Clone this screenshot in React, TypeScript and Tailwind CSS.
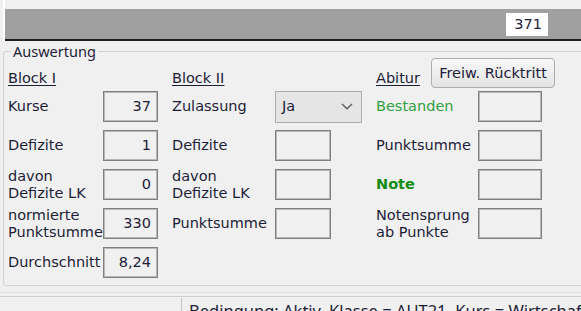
import React from "react";

const label = "text-[#1d1d38]";

function ValueBox({ value, w }: { value?: string; w: string }) {
  return (
    <div
      className={`${w} h-[31px] shrink-0 border border-[#7f7f7f] shadow-[inset_0_0_0_1px_#b8b8b8] bg-[#f0f0f0] flex items-center justify-end pr-[6px] ${label}`}
    >
      {value}
    </div>
  );
}

function Row({ children, box }: { children: React.ReactNode; box: React.ReactNode }) {
  return (
    <div className="h-[31px] flex items-center">
      {children}
      {box}
    </div>
  );
}

function Combo({ value }: { value: string }) {
  return (
    <div className="w-[87px] h-[32px] shrink-0 bg-[#e5e5e5] border border-[#adadad] flex items-center pl-[6px] pr-[8px]">
      <span className={label}>{value}</span>
      <svg className="ml-auto" width="12" height="7" viewBox="0 0 12 7">
        <path d="M1 1 L6 5.8 L11 1" fill="none" stroke="#5a5a5a" strokeWidth="1.3" />
      </svg>
    </div>
  );
}

export default function App() {
  return (
    <div className="w-[581px] h-[311px] overflow-hidden bg-[#f0f0f0] font-['DejaVu_Sans',sans-serif] text-[14.5px] leading-[17px]">
      {/* grid footer bar */}
      <div className="h-[41px] ml-[3px] border-l-2 border-white flex flex-col">
        <div className="h-[9px]" />
        <div className="h-[30px] bg-[#a0a0a0] flex items-center justify-end pr-[33px]">
          <div className="w-[42px] h-[23px] bg-white flex items-center justify-end pr-[6px] text-[#1d1d38]">
            371
          </div>
        </div>
        <div className="h-[2px] bg-[#1e1e1e]" />
      </div>

      <fieldset className="mt-[2px] ml-[3px] w-[600px] h-[243px] border border-[#d3d3d3] rounded-[3px]">
        <legend className="ml-[7px] px-[2px] leading-[17px] text-[14.5px] font-['Noto_Sans',sans-serif] text-[#1d1d38]">
          Auswertung
        </legend>
        <div className="flex pl-[4px]">
          {/* Block I */}
          <div className="w-[164px] shrink-0">
            <div className="h-[31px] flex items-end pb-[4px]">
              <span className={`${label} underline underline-offset-2`}>Block I</span>
            </div>
            <div className="flex flex-col gap-[8px]">
              <Row box={<ValueBox w="w-[55px]" value="37" />}>
                <span className={`w-[95px] ${label}`}>Kurse</span>
              </Row>
              <Row box={<ValueBox w="w-[55px]" value="1" />}>
                <span className={`w-[95px] ${label}`}>Defizite</span>
              </Row>
              <Row box={<ValueBox w="w-[55px]" value="0" />}>
                <span className={`w-[95px] ${label}`}>
                  davon
                  <br />
                  Defizite LK
                </span>
              </Row>
              <Row box={<ValueBox w="w-[55px]" value="330" />}>
                <span className={`w-[95px] ${label}`}>
                  normierte
                  <br />
                  Punktsumme
                </span>
              </Row>
              <Row box={<ValueBox w="w-[55px]" value="8,24" />}>
                <span className={`w-[95px] whitespace-nowrap ${label}`}>Durchschnitt</span>
              </Row>
            </div>
          </div>

          {/* Block II */}
          <div className="w-[204px] shrink-0">
            <div className="h-[31px] flex items-end pb-[4px]">
              <span className={`${label} underline underline-offset-2`}>Block II</span>
            </div>
            <div className="flex flex-col gap-[8px]">
              <Row box={<Combo value="Ja" />}>
                <span className={`w-[103px] ${label}`}>Zulassung</span>
              </Row>
              <Row box={<ValueBox w="w-[56px]" />}>
                <span className={`w-[103px] ${label}`}>Defizite</span>
              </Row>
              <Row box={<ValueBox w="w-[56px]" />}>
                <span className={`w-[103px] ${label}`}>
                  davon
                  <br />
                  Defizite LK
                </span>
              </Row>
              <Row box={<ValueBox w="w-[56px]" />}>
                <span className={`w-[103px] ${label}`}>Punktsumme</span>
              </Row>
            </div>
          </div>

          {/* Abitur */}
          <div className="flex-1">
            <div className="h-[31px] flex items-end">
              <span className={`${label} underline underline-offset-2 pb-[4px]`}>Abitur</span>
              <button className="self-start -mt-[2px] ml-[11px] w-[124px] h-[30px] rounded-[4px] border border-[#adadad] bg-gradient-to-b from-[#f8f8f8] to-[#e4e4e4] text-[#22203a] flex items-center justify-center">
                Freiw. Rücktritt
              </button>
            </div>
            <div className="flex flex-col gap-[8px]">
              <Row box={<ValueBox w="w-[64px]" />}>
                <span className="w-[102px] text-[#30a040]">Bestanden</span>
              </Row>
              <Row box={<ValueBox w="w-[64px]" />}>
                <span className={`w-[102px] ${label}`}>Punktsumme</span>
              </Row>
              <Row box={<ValueBox w="w-[64px]" />}>
                <span className="w-[102px] font-bold text-[#128c12]">Note</span>
              </Row>
              <Row box={<ValueBox w="w-[64px]" />}>
                <span className={`w-[102px] ${label}`}>
                  Notensprung
                  <br />
                  ab Punkte
                </span>
              </Row>
            </div>
          </div>
        </div>
      </fieldset>

      {/* status bar */}
      <div className="mt-[6px] border-t border-[#e2e2e2]">
        <div className="mt-[3px] border-t border-[#cdcdcd] flex h-[30px]">
          <div className="w-[182px] shrink-0 border-r border-[#c4c4c4] mt-[1px]" />
          <div className="pl-[7px] pt-[4px] whitespace-nowrap font-['Noto_Sans',sans-serif] text-[16.5px] leading-[20px] text-[#1d1d38]">
            Bedingung: Aktiv, Klasse = AUT21, Kurs = Wirtschaft
          </div>
        </div>
      </div>
    </div>
  );
}
